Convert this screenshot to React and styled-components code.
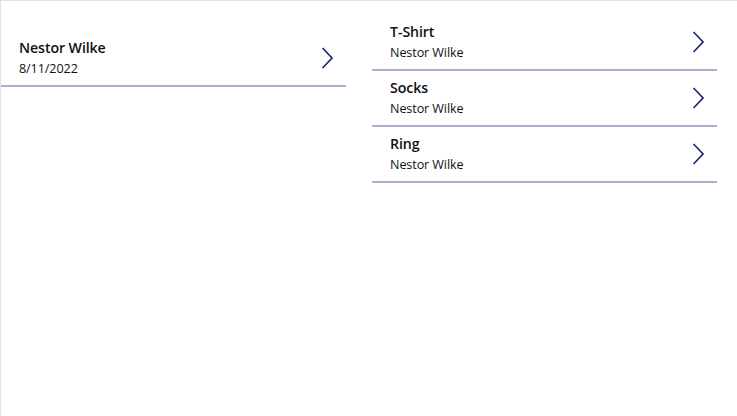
import React from 'react'
import styled, { createGlobalStyle } from 'styled-components'

const GlobalStyle = createGlobalStyle`
  html, body {
    margin: 0;
    padding: 0;
    background: #fff;
  }
  body {
    font-family: "Open Sans", "Noto Sans", sans-serif;
  }
`;

const Screen = styled.div`
  width: 737px;
  height: 416px;
  box-sizing: border-box;
  border-top: 1px solid #e1e1e1;
  border-left: 1px solid #e1e1e1;
  display: grid;
  grid-template-columns: 345px 345px;
  column-gap: 26px;
  align-items: start;
  overflow: hidden;
`;

const Gallery = styled.div`
  display: flex;
  flex-direction: column;
  padding-top: ${p => p.top}px;
`;

const Row = styled.div`
  height: 56px;
  box-sizing: border-box;
  border-bottom: 2px solid #abafd4;
  display: flex;
  align-items: center;
  padding: 0 13px 0 18px;
`;

const Texts = styled.div`
  flex: 1;
  display: flex;
  flex-direction: column;
  gap: 3px;
  margin-top: -1px;
`;

const Title = styled.div`
  font-size: 14.2px;
  font-weight: 600;
  color: #111;
  line-height: 19px;
  letter-spacing: -0.1px;
`;

const Subtitle = styled.div`
  font-size: 12.6px;
  color: #111;
  line-height: 18px;
  letter-spacing: -0.1px;
`;

const Chevron = () => (
  <svg width="12" height="22" viewBox="0 0 12 22" fill="none">
    <path d="M1.5 1 L11 11 L1.5 21" stroke="#1f2a74" strokeWidth="1.7" />
  </svg>
)

const items = [
  { title: 'T-Shirt', sub: 'Nestor Wilke' },
  { title: 'Socks', sub: 'Nestor Wilke' },
  { title: 'Ring', sub: 'Nestor Wilke' },
]

const App = () => (
  <>
    <GlobalStyle />
    <Screen>
      <Gallery top={30}>
        <Row>
          <Texts>
            <Title>Nestor Wilke</Title>
            <Subtitle>8/11/2022</Subtitle>
          </Texts>
          <Chevron />
        </Row>
      </Gallery>
      <Gallery top={14}>
        {items.map(it => (
          <Row key={it.title}>
            <Texts>
              <Title>{it.title}</Title>
              <Subtitle>{it.sub}</Subtitle>
            </Texts>
            <Chevron />
          </Row>
        ))}
      </Gallery>
    </Screen>
  </>
)

export default App;
